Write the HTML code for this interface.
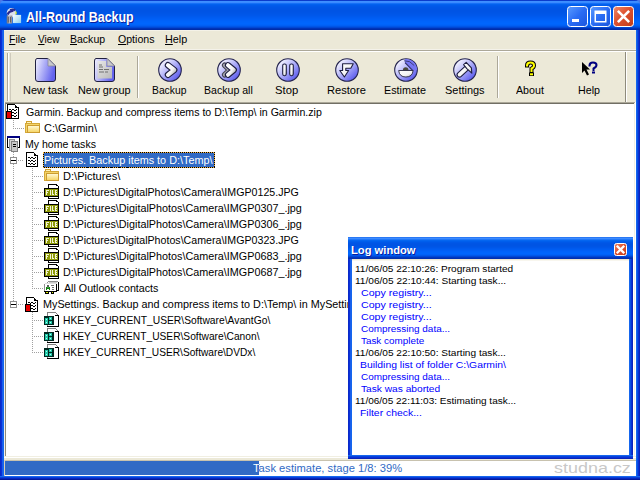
<!DOCTYPE html>
<html><head><meta charset="utf-8"><style>
html,body{margin:0;padding:0;width:640px;height:480px;overflow:hidden;background:#4A78E8;}
.t{position:absolute;white-space:pre;font-family:"Liberation Sans", sans-serif;}
svg{overflow:visible}
</style></head><body>
<div style="position:relative;width:640px;height:480px;overflow:hidden">
<div style="position:absolute;left:0px;top:0px;width:640px;height:30px;background:linear-gradient(to bottom,#0A3CCC 0.000%, #0A3CCC 3.333%,#3D8FFF 3.333%, #3D8FFF 6.667%,#3A8AFF 6.667%, #3A8AFF 10.000%,#1570F6 10.000%, #1570F6 13.333%,#0261EE 13.333%, #0261EE 16.667%,#005BEB 16.667%, #005BEB 20.000%,#0058E8 20.000%, #0058E8 23.333%,#0056E6 23.333%, #0056E6 26.667%,#0055E5 26.667%, #0055E5 30.000%,#0054E4 30.000%, #0054E4 33.333%,#0054E4 33.333%, #0054E4 36.667%,#0054E5 36.667%, #0054E5 40.000%,#0055E6 40.000%, #0055E6 43.333%,#0056E7 43.333%, #0056E7 46.667%,#0057E9 46.667%, #0057E9 50.000%,#0058EB 50.000%, #0058EB 53.333%,#005AEE 53.333%, #005AEE 56.667%,#005CF1 56.667%, #005CF1 60.000%,#005EF4 60.000%, #005EF4 63.333%,#0060F7 63.333%, #0060F7 66.667%,#0062F9 66.667%, #0062F9 70.000%,#0064FB 70.000%, #0064FB 73.333%,#0065FC 73.333%, #0065FC 76.667%,#0066FD 76.667%, #0066FD 80.000%,#0064FA 80.000%, #0064FA 83.333%,#005FF4 83.333%, #005FF4 86.667%,#0055E6 86.667%, #0055E6 90.000%,#0047D4 90.000%, #0047D4 93.333%,#0034B8 93.333%, #0034B8 96.667%,#002CA8 96.667%, #002CA8 100.000%);border-radius:5px 5px 0 0;"></div>
<svg style="position:absolute;left:5px;top:7px" width="18" height="18" viewBox="0 0 18 18"><defs><linearGradient id="gib" x1="0" y1="0" x2="1" y2="1"><stop offset="0" stop-color="#F4FCFF"/><stop offset="0.5" stop-color="#C4E8F8"/><stop offset="1" stop-color="#8CCCEC"/></linearGradient>
<linearGradient id="git" x1="0" y1="0" x2="1" y2="0"><stop offset="0" stop-color="#707078"/><stop offset="0.5" stop-color="#B8B8C0"/><stop offset="1" stop-color="#808088"/></linearGradient></defs>
<circle cx="6.4" cy="5.7" r="4.7" fill="#DCE2F0"/>
<path d="M2.6 7.6 Q3.6 4.2 8.4 3.6" stroke="#2A2A8E" stroke-width="2.2" fill="none"/>
<path d="M4.6 2.2 Q8 0.6 10.8 2.6 L9.6 4.2 Q7.8 3 5.4 3.6 Z" fill="#2C2C90"/>
<rect x="1.7" y="8.6" width="5.6" height="7.9" fill="url(#git)"/>
<rect x="2.8" y="10" width="1" height="5.5" fill="#606068"/><rect x="5" y="10" width="1" height="5.5" fill="#606068"/>
<rect x="7.9" y="7.9" width="8.2" height="8.2" fill="url(#gib)"/>
<path d="M10.9 3.8 Q12.2 5.4 11.6 7.6 L10.4 7.6 Q9.9 5.6 10.9 3.8 Z" fill="#D8F030"/>
</svg>
<div class="t" style="left:26.30px;top:8.72px;font-size:13.8px;line-height:17px;color:#fff;font-weight:bold;letter-spacing:0px;transform:scaleX(0.9008);transform-origin:0 0;text-shadow:1px 1px 0 #0A1E9E;">All-Round Backup</div>
<svg style="position:absolute;left:567px;top:6px" width="21" height="21" viewBox="0 0 21 21"><defs>
<linearGradient id="gblue" x1="0" y1="0" x2="1" y2="1"><stop offset="0" stop-color="#5A9BFF"/><stop offset="0.5" stop-color="#2A6CF4"/><stop offset="1" stop-color="#1B55DC"/></linearGradient>
<linearGradient id="gclose" x1="0" y1="0" x2="1" y2="1"><stop offset="0" stop-color="#F08A6A"/><stop offset="0.45" stop-color="#DE5230"/><stop offset="1" stop-color="#C23C18"/></linearGradient>
</defs><rect x="0.5" y="0.5" width="20" height="20" rx="3" ry="3" fill="url(#gblue)" stroke="#FFFFFF" stroke-width="1"/><rect x="5" y="13" width="7" height="3" fill="#fff"/></svg>
<svg style="position:absolute;left:590px;top:6px" width="21" height="21" viewBox="0 0 21 21"><defs>
<linearGradient id="gblue" x1="0" y1="0" x2="1" y2="1"><stop offset="0" stop-color="#5A9BFF"/><stop offset="0.5" stop-color="#2A6CF4"/><stop offset="1" stop-color="#1B55DC"/></linearGradient>
<linearGradient id="gclose" x1="0" y1="0" x2="1" y2="1"><stop offset="0" stop-color="#F08A6A"/><stop offset="0.45" stop-color="#DE5230"/><stop offset="1" stop-color="#C23C18"/></linearGradient>
</defs><rect x="0.5" y="0.5" width="20" height="20" rx="3" ry="3" fill="url(#gblue)" stroke="#FFFFFF" stroke-width="1"/><rect x="5" y="5" width="11" height="11" fill="none" stroke="#fff" stroke-width="1"/><rect x="5" y="5" width="11" height="3" fill="#fff"/><rect x="5.5" y="5.5" width="10" height="10" fill="none" stroke="#fff" stroke-width="1"/></svg>
<svg style="position:absolute;left:613px;top:6px" width="21" height="21" viewBox="0 0 21 21"><defs>
<linearGradient id="gblue" x1="0" y1="0" x2="1" y2="1"><stop offset="0" stop-color="#5A9BFF"/><stop offset="0.5" stop-color="#2A6CF4"/><stop offset="1" stop-color="#1B55DC"/></linearGradient>
<linearGradient id="gclose" x1="0" y1="0" x2="1" y2="1"><stop offset="0" stop-color="#F08A6A"/><stop offset="0.45" stop-color="#DE5230"/><stop offset="1" stop-color="#C23C18"/></linearGradient>
</defs><rect x="0.5" y="0.5" width="20" height="20" rx="3" ry="3" fill="url(#gclose)" stroke="#FFFFFF" stroke-width="1"/><path d="M5.8 5.8 L15.2 15.2 M15.2 5.8 L5.8 15.2" stroke="#fff" stroke-width="2.6" stroke-linecap="square"/></svg>
<div style="position:absolute;left:0px;top:30px;width:1px;height:450px;background:#0A2AC8;"></div>
<div style="position:absolute;left:1px;top:30px;width:1px;height:450px;background:#0831D9;"></div>
<div style="position:absolute;left:2px;top:30px;width:1px;height:450px;background:#1A5EEA;"></div>
<div style="position:absolute;left:3px;top:30px;width:1px;height:450px;background:#1566EE;"></div>
<div style="position:absolute;left:636px;top:30px;width:1px;height:450px;background:#1566EE;"></div>
<div style="position:absolute;left:637px;top:30px;width:1px;height:450px;background:#0A50E0;"></div>
<div style="position:absolute;left:638px;top:30px;width:1px;height:450px;background:#0831D9;"></div>
<div style="position:absolute;left:639px;top:30px;width:1px;height:450px;background:#0A24B8;"></div>
<div style="position:absolute;left:0px;top:476px;width:640px;height:1px;background:#1566EE;"></div>
<div style="position:absolute;left:0px;top:477px;width:640px;height:1px;background:#0840DA;"></div>
<div style="position:absolute;left:0px;top:478px;width:640px;height:1px;background:#0628C0;"></div>
<div style="position:absolute;left:0px;top:479px;width:640px;height:1px;background:#04189A;"></div>
<div style="position:absolute;left:4px;top:30px;width:632px;height:72px;background:#ECE9D8;"></div>
<div style="position:absolute;left:4px;top:30px;width:632px;height:1px;background:#F4F2E8;"></div>
<div style="position:absolute;left:4px;top:49px;width:632px;height:1px;background:#F4F2EA;"></div>
<div style="position:absolute;left:4px;top:50px;width:632px;height:1px;background:#ACA899;"></div>
<div style="position:absolute;left:4px;top:51px;width:632px;height:1px;background:#FFFFFF;"></div>
<div class="t" style="left:9.05px;top:32.69px;font-size:11px;line-height:13px;color:#000;font-weight:normal;letter-spacing:0px;transform:scaleX(0.9500);transform-origin:0 0;"><u>F</u>ile</div>
<div class="t" style="left:37.50px;top:32.69px;font-size:11px;line-height:13px;color:#000;font-weight:normal;letter-spacing:0px;transform:scaleX(0.9125);transform-origin:0 0;"><u>V</u>iew</div>
<div class="t" style="left:70.29px;top:32.69px;font-size:11px;line-height:13px;color:#000;font-weight:normal;letter-spacing:0px;transform:scaleX(0.9557);transform-origin:0 0;"><u>B</u>ackup</div>
<div class="t" style="left:117.50px;top:32.69px;font-size:11px;line-height:13px;color:#000;font-weight:normal;letter-spacing:0px;transform:scaleX(0.9605);transform-origin:0 0;"><u>O</u>ptions</div>
<div class="t" style="left:165.27px;top:32.69px;font-size:11px;line-height:13px;color:#000;font-weight:normal;letter-spacing:0px;transform:scaleX(0.9833);transform-origin:0 0;"><u>H</u>elp</div>
<div style="position:absolute;left:7px;top:53px;width:1px;height:48px;background:#ACA899;"></div>
<div style="position:absolute;left:8px;top:53px;width:1px;height:48px;background:#FFFFFF;"></div>
<div style="position:absolute;left:10px;top:53px;width:1px;height:48px;background:#CFCBBC;"></div>
<div style="position:absolute;left:137px;top:56px;width:1px;height:42px;background:#ACA899;"></div>
<div style="position:absolute;left:138px;top:56px;width:1px;height:42px;background:#FFFFFF;"></div>
<div style="position:absolute;left:497px;top:56px;width:1px;height:42px;background:#ACA899;"></div>
<div style="position:absolute;left:498px;top:56px;width:1px;height:42px;background:#FFFFFF;"></div>
<div style="position:absolute;left:625px;top:52px;width:1px;height:50px;background:#8E8B7C;"></div>
<div style="position:absolute;left:626px;top:52px;width:1px;height:50px;background:#FFFFFF;"></div>
<div class="t" style="left:22.90px;top:83.69px;font-size:11px;line-height:13px;color:#000;font-weight:normal;letter-spacing:0px;transform:scaleX(0.9955);transform-origin:0 0;">New task</div>
<div class="t" style="left:77.61px;top:83.69px;font-size:11px;line-height:13px;color:#000;font-weight:normal;letter-spacing:0px;transform:scaleX(0.9885);transform-origin:0 0;">New group</div>
<div class="t" style="left:152.06px;top:83.69px;font-size:11px;line-height:13px;color:#000;font-weight:normal;letter-spacing:0px;transform:scaleX(0.9371);transform-origin:0 0;">Backup</div>
<div class="t" style="left:204.34px;top:83.69px;font-size:11px;line-height:13px;color:#000;font-weight:normal;letter-spacing:0px;transform:scaleX(0.9612);transform-origin:0 0;">Backup all</div>
<div class="t" style="left:275.38px;top:83.69px;font-size:11px;line-height:13px;color:#000;font-weight:normal;letter-spacing:0px;transform:scaleX(1.0238);transform-origin:0 0;">Stop</div>
<div class="t" style="left:326.59px;top:83.69px;font-size:11px;line-height:13px;color:#000;font-weight:normal;letter-spacing:0px;transform:scaleX(1.0108);transform-origin:0 0;">Restore</div>
<div class="t" style="left:384.22px;top:83.69px;font-size:11px;line-height:13px;color:#000;font-weight:normal;letter-spacing:0px;transform:scaleX(0.9786);transform-origin:0 0;">Estimate</div>
<div class="t" style="left:444.71px;top:83.69px;font-size:11px;line-height:13px;color:#000;font-weight:normal;letter-spacing:0px;transform:scaleX(0.9949);transform-origin:0 0;">Settings</div>
<div class="t" style="left:515.80px;top:83.69px;font-size:11px;line-height:13px;color:#000;font-weight:normal;letter-spacing:0px;transform:scaleX(0.9690);transform-origin:0 0;">About</div>
<div class="t" style="left:577.63px;top:83.69px;font-size:11px;line-height:13px;color:#000;font-weight:normal;letter-spacing:0px;transform:scaleX(0.9714);transform-origin:0 0;">Help</div>
<svg style="position:absolute;left:34px;top:57px" width="24" height="26" viewBox="0 0 24 26"><defs><linearGradient id="gp" x1="0" y1="0" x2="1" y2="0.3"><stop offset="0" stop-color="#F4F4FF"/><stop offset="1" stop-color="#6464EE"/></linearGradient></defs>
<path d="M3 1.5 H14 L21.5 9 V22 Q21.5 24.5 19 24.5 H4 Q1.5 24.5 1.5 22 V4 Q1.5 1.5 3 1.5 Z" fill="url(#gp)" stroke="#202040" stroke-width="1"/>
<path d="M14 1.5 V9 H21.5 Z" fill="#C8C8CC" stroke="#8A8A9A" stroke-width="0.8"/></svg>
<svg style="position:absolute;left:93px;top:57px" width="24" height="26" viewBox="0 0 24 26"><defs><linearGradient id="gp2" x1="0" y1="0" x2="1" y2="0.3"><stop offset="0" stop-color="#F4F4FF"/><stop offset="1" stop-color="#6464EE"/></linearGradient>
<linearGradient id="gg2" x1="0" y1="0" x2="1" y2="1"><stop offset="0" stop-color="#E8E8E8"/><stop offset="1" stop-color="#B8B8B8"/></linearGradient></defs>
<path d="M3 1.5 H14 L21.5 9 V22 Q21.5 24.5 19 24.5 H4 Q1.5 24.5 1.5 22 V4 Q1.5 1.5 3 1.5 Z" fill="url(#gp2)" stroke="#202040" stroke-width="1"/>
<path d="M4.5 4 H13 V10 H19 V21.5 H4.5 Z" fill="url(#gg2)"/>
<path d="M14 1.5 V9 H21.5 Z" fill="#C8C8CC" stroke="#8A8A9A" stroke-width="0.8"/>
<path d="M6 8 h3 M6 10 h4 M6 12.5 h3 h1 M11 12.5 h5 M6 15 h5 M12 15 h3" stroke="#707070" stroke-width="1.2"/></svg>
<svg style="position:absolute;left:157.8px;top:57.5px" width="24" height="24" viewBox="0 0 24 24"><defs><linearGradient id="gc1" x1="0.1" y1="0.1" x2="0.9" y2="0.9"><stop offset="0" stop-color="#FCFCFF"/><stop offset="0.45" stop-color="#B6B6FA"/><stop offset="1" stop-color="#5454EC"/></linearGradient>
<linearGradient id="gw1" x1="0" y1="0" x2="1" y2="1"><stop offset="0" stop-color="#FFFFFF"/><stop offset="0.6" stop-color="#F4F4F4"/><stop offset="1" stop-color="#B8B8B8"/></linearGradient></defs><circle cx="12" cy="12" r="11.3" fill="url(#gc1)" stroke="#262650" stroke-width="1.1"/><path d="M10 7.2 L16.2 12 L10 16.8" stroke="#1E1E40" stroke-width="6.4" fill="none" stroke-linecap="round" stroke-linejoin="round"/><path d="M10 7.2 L16.2 12 L10 16.8" stroke="url(#gw1)" stroke-width="4.2" fill="none" stroke-linecap="round" stroke-linejoin="round"/></svg>
<svg style="position:absolute;left:216.8px;top:57.5px" width="24" height="24" viewBox="0 0 24 24"><defs><linearGradient id="gc2" x1="0.1" y1="0.1" x2="0.9" y2="0.9"><stop offset="0" stop-color="#FCFCFF"/><stop offset="0.45" stop-color="#B6B6FA"/><stop offset="1" stop-color="#5454EC"/></linearGradient>
<linearGradient id="gw2" x1="0" y1="0" x2="1" y2="1"><stop offset="0" stop-color="#FFFFFF"/><stop offset="0.6" stop-color="#F4F4F4"/><stop offset="1" stop-color="#B8B8B8"/></linearGradient></defs><circle cx="12" cy="12" r="11.3" fill="url(#gc2)" stroke="#262650" stroke-width="1.1"/><path d="M7.6 7.2 L12.6 12 L7.6 16.8" stroke="#404050" stroke-width="5.4" fill="none" stroke-linecap="round" stroke-linejoin="round"/><path d="M7.6 7.2 L12.6 12 L7.6 16.8" stroke="#A8A8B0" stroke-width="3.4" fill="none" stroke-linecap="round" stroke-linejoin="round"/><path d="M11 7.2 L16.8 12 L11 16.8" stroke="#1E1E40" stroke-width="6.2" fill="none" stroke-linecap="round" stroke-linejoin="round"/><path d="M11 7.2 L16.8 12 L11 16.8" stroke="url(#gw2)" stroke-width="4" fill="none" stroke-linecap="round" stroke-linejoin="round"/></svg>
<svg style="position:absolute;left:276px;top:57.5px" width="24" height="24" viewBox="0 0 24 24"><defs><linearGradient id="gc3" x1="0.1" y1="0.1" x2="0.9" y2="0.9"><stop offset="0" stop-color="#FCFCFF"/><stop offset="0.45" stop-color="#B6B6FA"/><stop offset="1" stop-color="#5454EC"/></linearGradient>
<linearGradient id="gw3" x1="0" y1="0" x2="1" y2="1"><stop offset="0" stop-color="#FFFFFF"/><stop offset="0.6" stop-color="#F4F4F4"/><stop offset="1" stop-color="#B8B8B8"/></linearGradient></defs><circle cx="12" cy="12" r="11.3" fill="url(#gc3)" stroke="#262650" stroke-width="1.1"/><rect x="6.7" y="6" width="3.6" height="11.7" rx="1.6" fill="url(#gw3)" stroke="#1E1E40" stroke-width="1.1"/><rect x="13.7" y="6" width="3.6" height="11.7" rx="1.6" fill="url(#gw3)" stroke="#1E1E40" stroke-width="1.1"/></svg>
<svg style="position:absolute;left:335.2px;top:57.5px" width="24" height="24" viewBox="0 0 24 24"><defs><linearGradient id="gc4" x1="0.1" y1="0.1" x2="0.9" y2="0.9"><stop offset="0" stop-color="#FCFCFF"/><stop offset="0.45" stop-color="#B6B6FA"/><stop offset="1" stop-color="#5454EC"/></linearGradient>
<linearGradient id="gw4" x1="0" y1="0" x2="1" y2="1"><stop offset="0" stop-color="#FFFFFF"/><stop offset="0.6" stop-color="#F4F4F4"/><stop offset="1" stop-color="#B8B8B8"/></linearGradient></defs><circle cx="12" cy="12" r="11.3" fill="url(#gc4)" stroke="#262650" stroke-width="1.1"/><path d="M7.6 5.8 H18.3 L15.8 10.2 H10.8 V12.5 H13.6 L9.4 19 L4.8 12.5 H7.6 Z" fill="url(#gw4)" stroke="#1E1E40" stroke-width="1.1" stroke-linejoin="round"/></svg>
<svg style="position:absolute;left:394.2px;top:57.5px" width="24" height="24" viewBox="0 0 24 24"><defs><linearGradient id="gc5" x1="0.1" y1="0.1" x2="0.9" y2="0.9"><stop offset="0" stop-color="#FCFCFF"/><stop offset="0.45" stop-color="#B6B6FA"/><stop offset="1" stop-color="#5454EC"/></linearGradient>
<linearGradient id="gw5" x1="0" y1="0" x2="1" y2="1"><stop offset="0" stop-color="#FFFFFF"/><stop offset="0.6" stop-color="#F4F4F4"/><stop offset="1" stop-color="#B8B8B8"/></linearGradient></defs><circle cx="12" cy="12" r="11.3" fill="url(#gc5)" stroke="#262650" stroke-width="1.1"/><path d="M11 1 A11 11 0 0 1 23 12 L19.1 12.8 L11 4.7 Z" fill="#7676F2"/><path d="M11 4.7 L19.1 12.8" stroke="#2E2E60" stroke-width="1.1"/><path d="M10 2.8 Q16 2.2 20.2 7.5" stroke="#303060" stroke-width="1" fill="none" opacity="0.8"/><path d="M8.8 12.5 Q9 9.2 11.7 9.2 Q14.4 9.2 14.6 12.5 Z" fill="#4A4A3A"/><path d="M4.7 12.5 H19.1 Q18.5 19 11.9 19 Q5.3 19 4.7 12.5 Z" fill="url(#gw5)" stroke="#2A2A40" stroke-width="0.9"/></svg>
<svg style="position:absolute;left:453.2px;top:57.5px" width="24" height="24" viewBox="0 0 24 24"><defs><linearGradient id="gc6" x1="0.1" y1="0.1" x2="0.9" y2="0.9"><stop offset="0" stop-color="#FCFCFF"/><stop offset="0.45" stop-color="#B6B6FA"/><stop offset="1" stop-color="#5454EC"/></linearGradient>
<linearGradient id="gw6" x1="0" y1="0" x2="1" y2="1"><stop offset="0" stop-color="#FFFFFF"/><stop offset="0.6" stop-color="#F4F4F4"/><stop offset="1" stop-color="#B8B8B8"/></linearGradient></defs><circle cx="12" cy="12" r="11.3" fill="url(#gc6)" stroke="#262650" stroke-width="1.1"/><path d="M14.2 9.6 L6.6 16.6" stroke="#1E1E40" stroke-width="6" stroke-linecap="round"/><path d="M14.2 9.6 L6.6 16.6" stroke="url(#gw6)" stroke-width="3.8" stroke-linecap="round"/><path d="M10.6 6.6 L13.2 4.4 L18.4 9.8 L18.8 15.2 L13.8 10.6 Z" fill="url(#gw6)" stroke="#1E1E40" stroke-width="1.1" stroke-linejoin="round"/></svg>
<svg style="position:absolute;left:524px;top:61px" width="13" height="16" viewBox="0 0 13 16"><path d="M3 4.5 Q3 1.5 6.5 1.5 Q10 1.5 10 4.5 Q10 6.5 7.5 7.5 L7.5 10" fill="none" stroke="#000" stroke-width="4" stroke-linecap="square"/>
<path d="M3 4.5 Q3 1.5 6.5 1.5 Q10 1.5 10 4.5 Q10 6.5 7.5 7.5 L7.5 10" fill="none" stroke="#FFFF00" stroke-width="2" stroke-linecap="square"/>
<rect x="5" y="11.5" width="5" height="3.5" fill="#000"/><rect x="6" y="12.3" width="3" height="2" fill="#FFFF00"/></svg>
<svg style="position:absolute;left:581px;top:61px" width="18" height="16" viewBox="0 0 18 16"><path d="M1 1 V12 L3.5 9.5 L6 14.5 L8 13.5 L5.5 8.5 H9 Z" fill="#000"/>
<path d="M8.5 4.5 Q8.5 1.5 12 1.5 Q15.5 1.5 15.5 4 Q15.5 6 12.5 7.5 V9" fill="none" stroke="#000080" stroke-width="2" stroke-linecap="square"/>
<rect x="11" y="10.5" width="3" height="2" fill="#000080"/></svg>
<div style="position:absolute;left:4px;top:102px;width:632px;height:358px;background:#FFFFFF;"></div>
<div style="position:absolute;left:4px;top:102px;width:631px;height:1px;background:#ACA899;"></div>
<div style="position:absolute;left:4px;top:103px;width:631px;height:1px;background:#716F64;"></div>
<div style="position:absolute;left:4px;top:102px;width:1px;height:356px;background:#F4F2E8;"></div>
<div style="position:absolute;left:5px;top:103px;width:1px;height:355px;background:#8E8A7A;"></div>
<div style="position:absolute;left:634px;top:103px;width:1px;height:356px;background:#F1EFE2;"></div>
<div style="position:absolute;left:635px;top:102px;width:1px;height:358px;background:#FFFFFF;"></div>
<div style="position:absolute;left:4px;top:456px;width:632px;height:1px;background:#F1EFE2;"></div>
<div style="position:absolute;left:4px;top:457px;width:632px;height:1px;background:#FFFFFF;"></div>
<div style="position:absolute;left:4px;top:458px;width:632px;height:2px;background:#ECE9D8;"></div>
<div style="position:absolute;left:13px;top:120px;width:1px;height:1px;background:#A0A0A0;"></div>
<div style="position:absolute;left:13px;top:122px;width:1px;height:1px;background:#A0A0A0;"></div>
<div style="position:absolute;left:13px;top:124px;width:1px;height:1px;background:#A0A0A0;"></div>
<div style="position:absolute;left:13px;top:126px;width:1px;height:1px;background:#A0A0A0;"></div>
<div style="position:absolute;left:13px;top:128px;width:1px;height:1px;background:#A0A0A0;"></div>
<div style="position:absolute;left:15px;top:128px;width:1px;height:1px;background:#A0A0A0;"></div>
<div style="position:absolute;left:17px;top:128px;width:1px;height:1px;background:#A0A0A0;"></div>
<div style="position:absolute;left:19px;top:128px;width:1px;height:1px;background:#A0A0A0;"></div>
<div style="position:absolute;left:21px;top:128px;width:1px;height:1px;background:#A0A0A0;"></div>
<div style="position:absolute;left:23px;top:128px;width:1px;height:1px;background:#A0A0A0;"></div>
<div style="position:absolute;left:13px;top:150px;width:1px;height:1px;background:#A0A0A0;"></div>
<div style="position:absolute;left:13px;top:152px;width:1px;height:1px;background:#A0A0A0;"></div>
<div style="position:absolute;left:13px;top:154px;width:1px;height:1px;background:#A0A0A0;"></div>
<div style="position:absolute;left:13px;top:156px;width:1px;height:1px;background:#A0A0A0;"></div>
<div style="position:absolute;left:13px;top:158px;width:1px;height:1px;background:#A0A0A0;"></div>
<div style="position:absolute;left:13px;top:160px;width:1px;height:1px;background:#A0A0A0;"></div>
<div style="position:absolute;left:13px;top:162px;width:1px;height:1px;background:#A0A0A0;"></div>
<div style="position:absolute;left:13px;top:164px;width:1px;height:1px;background:#A0A0A0;"></div>
<div style="position:absolute;left:13px;top:166px;width:1px;height:1px;background:#A0A0A0;"></div>
<div style="position:absolute;left:13px;top:168px;width:1px;height:1px;background:#A0A0A0;"></div>
<div style="position:absolute;left:13px;top:170px;width:1px;height:1px;background:#A0A0A0;"></div>
<div style="position:absolute;left:13px;top:172px;width:1px;height:1px;background:#A0A0A0;"></div>
<div style="position:absolute;left:13px;top:174px;width:1px;height:1px;background:#A0A0A0;"></div>
<div style="position:absolute;left:13px;top:176px;width:1px;height:1px;background:#A0A0A0;"></div>
<div style="position:absolute;left:13px;top:178px;width:1px;height:1px;background:#A0A0A0;"></div>
<div style="position:absolute;left:13px;top:180px;width:1px;height:1px;background:#A0A0A0;"></div>
<div style="position:absolute;left:13px;top:182px;width:1px;height:1px;background:#A0A0A0;"></div>
<div style="position:absolute;left:13px;top:184px;width:1px;height:1px;background:#A0A0A0;"></div>
<div style="position:absolute;left:13px;top:186px;width:1px;height:1px;background:#A0A0A0;"></div>
<div style="position:absolute;left:13px;top:188px;width:1px;height:1px;background:#A0A0A0;"></div>
<div style="position:absolute;left:13px;top:190px;width:1px;height:1px;background:#A0A0A0;"></div>
<div style="position:absolute;left:13px;top:192px;width:1px;height:1px;background:#A0A0A0;"></div>
<div style="position:absolute;left:13px;top:194px;width:1px;height:1px;background:#A0A0A0;"></div>
<div style="position:absolute;left:13px;top:196px;width:1px;height:1px;background:#A0A0A0;"></div>
<div style="position:absolute;left:13px;top:198px;width:1px;height:1px;background:#A0A0A0;"></div>
<div style="position:absolute;left:13px;top:200px;width:1px;height:1px;background:#A0A0A0;"></div>
<div style="position:absolute;left:13px;top:202px;width:1px;height:1px;background:#A0A0A0;"></div>
<div style="position:absolute;left:13px;top:204px;width:1px;height:1px;background:#A0A0A0;"></div>
<div style="position:absolute;left:13px;top:206px;width:1px;height:1px;background:#A0A0A0;"></div>
<div style="position:absolute;left:13px;top:208px;width:1px;height:1px;background:#A0A0A0;"></div>
<div style="position:absolute;left:13px;top:210px;width:1px;height:1px;background:#A0A0A0;"></div>
<div style="position:absolute;left:13px;top:212px;width:1px;height:1px;background:#A0A0A0;"></div>
<div style="position:absolute;left:13px;top:214px;width:1px;height:1px;background:#A0A0A0;"></div>
<div style="position:absolute;left:13px;top:216px;width:1px;height:1px;background:#A0A0A0;"></div>
<div style="position:absolute;left:13px;top:218px;width:1px;height:1px;background:#A0A0A0;"></div>
<div style="position:absolute;left:13px;top:220px;width:1px;height:1px;background:#A0A0A0;"></div>
<div style="position:absolute;left:13px;top:222px;width:1px;height:1px;background:#A0A0A0;"></div>
<div style="position:absolute;left:13px;top:224px;width:1px;height:1px;background:#A0A0A0;"></div>
<div style="position:absolute;left:13px;top:226px;width:1px;height:1px;background:#A0A0A0;"></div>
<div style="position:absolute;left:13px;top:228px;width:1px;height:1px;background:#A0A0A0;"></div>
<div style="position:absolute;left:13px;top:230px;width:1px;height:1px;background:#A0A0A0;"></div>
<div style="position:absolute;left:13px;top:232px;width:1px;height:1px;background:#A0A0A0;"></div>
<div style="position:absolute;left:13px;top:234px;width:1px;height:1px;background:#A0A0A0;"></div>
<div style="position:absolute;left:13px;top:236px;width:1px;height:1px;background:#A0A0A0;"></div>
<div style="position:absolute;left:13px;top:238px;width:1px;height:1px;background:#A0A0A0;"></div>
<div style="position:absolute;left:13px;top:240px;width:1px;height:1px;background:#A0A0A0;"></div>
<div style="position:absolute;left:13px;top:242px;width:1px;height:1px;background:#A0A0A0;"></div>
<div style="position:absolute;left:13px;top:244px;width:1px;height:1px;background:#A0A0A0;"></div>
<div style="position:absolute;left:13px;top:246px;width:1px;height:1px;background:#A0A0A0;"></div>
<div style="position:absolute;left:13px;top:248px;width:1px;height:1px;background:#A0A0A0;"></div>
<div style="position:absolute;left:13px;top:250px;width:1px;height:1px;background:#A0A0A0;"></div>
<div style="position:absolute;left:13px;top:252px;width:1px;height:1px;background:#A0A0A0;"></div>
<div style="position:absolute;left:13px;top:254px;width:1px;height:1px;background:#A0A0A0;"></div>
<div style="position:absolute;left:13px;top:256px;width:1px;height:1px;background:#A0A0A0;"></div>
<div style="position:absolute;left:13px;top:258px;width:1px;height:1px;background:#A0A0A0;"></div>
<div style="position:absolute;left:13px;top:260px;width:1px;height:1px;background:#A0A0A0;"></div>
<div style="position:absolute;left:13px;top:262px;width:1px;height:1px;background:#A0A0A0;"></div>
<div style="position:absolute;left:13px;top:264px;width:1px;height:1px;background:#A0A0A0;"></div>
<div style="position:absolute;left:13px;top:266px;width:1px;height:1px;background:#A0A0A0;"></div>
<div style="position:absolute;left:13px;top:268px;width:1px;height:1px;background:#A0A0A0;"></div>
<div style="position:absolute;left:13px;top:270px;width:1px;height:1px;background:#A0A0A0;"></div>
<div style="position:absolute;left:13px;top:272px;width:1px;height:1px;background:#A0A0A0;"></div>
<div style="position:absolute;left:13px;top:274px;width:1px;height:1px;background:#A0A0A0;"></div>
<div style="position:absolute;left:13px;top:276px;width:1px;height:1px;background:#A0A0A0;"></div>
<div style="position:absolute;left:13px;top:278px;width:1px;height:1px;background:#A0A0A0;"></div>
<div style="position:absolute;left:13px;top:280px;width:1px;height:1px;background:#A0A0A0;"></div>
<div style="position:absolute;left:13px;top:282px;width:1px;height:1px;background:#A0A0A0;"></div>
<div style="position:absolute;left:13px;top:284px;width:1px;height:1px;background:#A0A0A0;"></div>
<div style="position:absolute;left:13px;top:286px;width:1px;height:1px;background:#A0A0A0;"></div>
<div style="position:absolute;left:13px;top:288px;width:1px;height:1px;background:#A0A0A0;"></div>
<div style="position:absolute;left:13px;top:290px;width:1px;height:1px;background:#A0A0A0;"></div>
<div style="position:absolute;left:13px;top:292px;width:1px;height:1px;background:#A0A0A0;"></div>
<div style="position:absolute;left:13px;top:294px;width:1px;height:1px;background:#A0A0A0;"></div>
<div style="position:absolute;left:13px;top:296px;width:1px;height:1px;background:#A0A0A0;"></div>
<div style="position:absolute;left:13px;top:298px;width:1px;height:1px;background:#A0A0A0;"></div>
<div style="position:absolute;left:13px;top:300px;width:1px;height:1px;background:#A0A0A0;"></div>
<div style="position:absolute;left:13px;top:302px;width:1px;height:1px;background:#A0A0A0;"></div>
<div style="position:absolute;left:18px;top:160px;width:1px;height:1px;background:#A0A0A0;"></div>
<div style="position:absolute;left:20px;top:160px;width:1px;height:1px;background:#A0A0A0;"></div>
<div style="position:absolute;left:22px;top:160px;width:1px;height:1px;background:#A0A0A0;"></div>
<div style="position:absolute;left:18px;top:304px;width:1px;height:1px;background:#A0A0A0;"></div>
<div style="position:absolute;left:20px;top:304px;width:1px;height:1px;background:#A0A0A0;"></div>
<div style="position:absolute;left:22px;top:304px;width:1px;height:1px;background:#A0A0A0;"></div>
<div style="position:absolute;left:32px;top:168px;width:1px;height:1px;background:#A0A0A0;"></div>
<div style="position:absolute;left:32px;top:170px;width:1px;height:1px;background:#A0A0A0;"></div>
<div style="position:absolute;left:32px;top:172px;width:1px;height:1px;background:#A0A0A0;"></div>
<div style="position:absolute;left:32px;top:174px;width:1px;height:1px;background:#A0A0A0;"></div>
<div style="position:absolute;left:32px;top:176px;width:1px;height:1px;background:#A0A0A0;"></div>
<div style="position:absolute;left:32px;top:178px;width:1px;height:1px;background:#A0A0A0;"></div>
<div style="position:absolute;left:32px;top:180px;width:1px;height:1px;background:#A0A0A0;"></div>
<div style="position:absolute;left:32px;top:182px;width:1px;height:1px;background:#A0A0A0;"></div>
<div style="position:absolute;left:32px;top:184px;width:1px;height:1px;background:#A0A0A0;"></div>
<div style="position:absolute;left:32px;top:186px;width:1px;height:1px;background:#A0A0A0;"></div>
<div style="position:absolute;left:32px;top:188px;width:1px;height:1px;background:#A0A0A0;"></div>
<div style="position:absolute;left:32px;top:190px;width:1px;height:1px;background:#A0A0A0;"></div>
<div style="position:absolute;left:32px;top:192px;width:1px;height:1px;background:#A0A0A0;"></div>
<div style="position:absolute;left:32px;top:194px;width:1px;height:1px;background:#A0A0A0;"></div>
<div style="position:absolute;left:32px;top:196px;width:1px;height:1px;background:#A0A0A0;"></div>
<div style="position:absolute;left:32px;top:198px;width:1px;height:1px;background:#A0A0A0;"></div>
<div style="position:absolute;left:32px;top:200px;width:1px;height:1px;background:#A0A0A0;"></div>
<div style="position:absolute;left:32px;top:202px;width:1px;height:1px;background:#A0A0A0;"></div>
<div style="position:absolute;left:32px;top:204px;width:1px;height:1px;background:#A0A0A0;"></div>
<div style="position:absolute;left:32px;top:206px;width:1px;height:1px;background:#A0A0A0;"></div>
<div style="position:absolute;left:32px;top:208px;width:1px;height:1px;background:#A0A0A0;"></div>
<div style="position:absolute;left:32px;top:210px;width:1px;height:1px;background:#A0A0A0;"></div>
<div style="position:absolute;left:32px;top:212px;width:1px;height:1px;background:#A0A0A0;"></div>
<div style="position:absolute;left:32px;top:214px;width:1px;height:1px;background:#A0A0A0;"></div>
<div style="position:absolute;left:32px;top:216px;width:1px;height:1px;background:#A0A0A0;"></div>
<div style="position:absolute;left:32px;top:218px;width:1px;height:1px;background:#A0A0A0;"></div>
<div style="position:absolute;left:32px;top:220px;width:1px;height:1px;background:#A0A0A0;"></div>
<div style="position:absolute;left:32px;top:222px;width:1px;height:1px;background:#A0A0A0;"></div>
<div style="position:absolute;left:32px;top:224px;width:1px;height:1px;background:#A0A0A0;"></div>
<div style="position:absolute;left:32px;top:226px;width:1px;height:1px;background:#A0A0A0;"></div>
<div style="position:absolute;left:32px;top:228px;width:1px;height:1px;background:#A0A0A0;"></div>
<div style="position:absolute;left:32px;top:230px;width:1px;height:1px;background:#A0A0A0;"></div>
<div style="position:absolute;left:32px;top:232px;width:1px;height:1px;background:#A0A0A0;"></div>
<div style="position:absolute;left:32px;top:234px;width:1px;height:1px;background:#A0A0A0;"></div>
<div style="position:absolute;left:32px;top:236px;width:1px;height:1px;background:#A0A0A0;"></div>
<div style="position:absolute;left:32px;top:238px;width:1px;height:1px;background:#A0A0A0;"></div>
<div style="position:absolute;left:32px;top:240px;width:1px;height:1px;background:#A0A0A0;"></div>
<div style="position:absolute;left:32px;top:242px;width:1px;height:1px;background:#A0A0A0;"></div>
<div style="position:absolute;left:32px;top:244px;width:1px;height:1px;background:#A0A0A0;"></div>
<div style="position:absolute;left:32px;top:246px;width:1px;height:1px;background:#A0A0A0;"></div>
<div style="position:absolute;left:32px;top:248px;width:1px;height:1px;background:#A0A0A0;"></div>
<div style="position:absolute;left:32px;top:250px;width:1px;height:1px;background:#A0A0A0;"></div>
<div style="position:absolute;left:32px;top:252px;width:1px;height:1px;background:#A0A0A0;"></div>
<div style="position:absolute;left:32px;top:254px;width:1px;height:1px;background:#A0A0A0;"></div>
<div style="position:absolute;left:32px;top:256px;width:1px;height:1px;background:#A0A0A0;"></div>
<div style="position:absolute;left:32px;top:258px;width:1px;height:1px;background:#A0A0A0;"></div>
<div style="position:absolute;left:32px;top:260px;width:1px;height:1px;background:#A0A0A0;"></div>
<div style="position:absolute;left:32px;top:262px;width:1px;height:1px;background:#A0A0A0;"></div>
<div style="position:absolute;left:32px;top:264px;width:1px;height:1px;background:#A0A0A0;"></div>
<div style="position:absolute;left:32px;top:266px;width:1px;height:1px;background:#A0A0A0;"></div>
<div style="position:absolute;left:32px;top:268px;width:1px;height:1px;background:#A0A0A0;"></div>
<div style="position:absolute;left:32px;top:270px;width:1px;height:1px;background:#A0A0A0;"></div>
<div style="position:absolute;left:32px;top:272px;width:1px;height:1px;background:#A0A0A0;"></div>
<div style="position:absolute;left:32px;top:274px;width:1px;height:1px;background:#A0A0A0;"></div>
<div style="position:absolute;left:32px;top:276px;width:1px;height:1px;background:#A0A0A0;"></div>
<div style="position:absolute;left:32px;top:278px;width:1px;height:1px;background:#A0A0A0;"></div>
<div style="position:absolute;left:32px;top:280px;width:1px;height:1px;background:#A0A0A0;"></div>
<div style="position:absolute;left:32px;top:282px;width:1px;height:1px;background:#A0A0A0;"></div>
<div style="position:absolute;left:32px;top:284px;width:1px;height:1px;background:#A0A0A0;"></div>
<div style="position:absolute;left:32px;top:286px;width:1px;height:1px;background:#A0A0A0;"></div>
<div style="position:absolute;left:32px;top:288px;width:1px;height:1px;background:#A0A0A0;"></div>
<div style="position:absolute;left:32px;top:176px;width:1px;height:1px;background:#A0A0A0;"></div>
<div style="position:absolute;left:34px;top:176px;width:1px;height:1px;background:#A0A0A0;"></div>
<div style="position:absolute;left:36px;top:176px;width:1px;height:1px;background:#A0A0A0;"></div>
<div style="position:absolute;left:38px;top:176px;width:1px;height:1px;background:#A0A0A0;"></div>
<div style="position:absolute;left:40px;top:176px;width:1px;height:1px;background:#A0A0A0;"></div>
<div style="position:absolute;left:42px;top:176px;width:1px;height:1px;background:#A0A0A0;"></div>
<div style="position:absolute;left:32px;top:192px;width:1px;height:1px;background:#A0A0A0;"></div>
<div style="position:absolute;left:34px;top:192px;width:1px;height:1px;background:#A0A0A0;"></div>
<div style="position:absolute;left:36px;top:192px;width:1px;height:1px;background:#A0A0A0;"></div>
<div style="position:absolute;left:38px;top:192px;width:1px;height:1px;background:#A0A0A0;"></div>
<div style="position:absolute;left:40px;top:192px;width:1px;height:1px;background:#A0A0A0;"></div>
<div style="position:absolute;left:42px;top:192px;width:1px;height:1px;background:#A0A0A0;"></div>
<div style="position:absolute;left:32px;top:208px;width:1px;height:1px;background:#A0A0A0;"></div>
<div style="position:absolute;left:34px;top:208px;width:1px;height:1px;background:#A0A0A0;"></div>
<div style="position:absolute;left:36px;top:208px;width:1px;height:1px;background:#A0A0A0;"></div>
<div style="position:absolute;left:38px;top:208px;width:1px;height:1px;background:#A0A0A0;"></div>
<div style="position:absolute;left:40px;top:208px;width:1px;height:1px;background:#A0A0A0;"></div>
<div style="position:absolute;left:42px;top:208px;width:1px;height:1px;background:#A0A0A0;"></div>
<div style="position:absolute;left:32px;top:224px;width:1px;height:1px;background:#A0A0A0;"></div>
<div style="position:absolute;left:34px;top:224px;width:1px;height:1px;background:#A0A0A0;"></div>
<div style="position:absolute;left:36px;top:224px;width:1px;height:1px;background:#A0A0A0;"></div>
<div style="position:absolute;left:38px;top:224px;width:1px;height:1px;background:#A0A0A0;"></div>
<div style="position:absolute;left:40px;top:224px;width:1px;height:1px;background:#A0A0A0;"></div>
<div style="position:absolute;left:42px;top:224px;width:1px;height:1px;background:#A0A0A0;"></div>
<div style="position:absolute;left:32px;top:240px;width:1px;height:1px;background:#A0A0A0;"></div>
<div style="position:absolute;left:34px;top:240px;width:1px;height:1px;background:#A0A0A0;"></div>
<div style="position:absolute;left:36px;top:240px;width:1px;height:1px;background:#A0A0A0;"></div>
<div style="position:absolute;left:38px;top:240px;width:1px;height:1px;background:#A0A0A0;"></div>
<div style="position:absolute;left:40px;top:240px;width:1px;height:1px;background:#A0A0A0;"></div>
<div style="position:absolute;left:42px;top:240px;width:1px;height:1px;background:#A0A0A0;"></div>
<div style="position:absolute;left:32px;top:256px;width:1px;height:1px;background:#A0A0A0;"></div>
<div style="position:absolute;left:34px;top:256px;width:1px;height:1px;background:#A0A0A0;"></div>
<div style="position:absolute;left:36px;top:256px;width:1px;height:1px;background:#A0A0A0;"></div>
<div style="position:absolute;left:38px;top:256px;width:1px;height:1px;background:#A0A0A0;"></div>
<div style="position:absolute;left:40px;top:256px;width:1px;height:1px;background:#A0A0A0;"></div>
<div style="position:absolute;left:42px;top:256px;width:1px;height:1px;background:#A0A0A0;"></div>
<div style="position:absolute;left:32px;top:272px;width:1px;height:1px;background:#A0A0A0;"></div>
<div style="position:absolute;left:34px;top:272px;width:1px;height:1px;background:#A0A0A0;"></div>
<div style="position:absolute;left:36px;top:272px;width:1px;height:1px;background:#A0A0A0;"></div>
<div style="position:absolute;left:38px;top:272px;width:1px;height:1px;background:#A0A0A0;"></div>
<div style="position:absolute;left:40px;top:272px;width:1px;height:1px;background:#A0A0A0;"></div>
<div style="position:absolute;left:42px;top:272px;width:1px;height:1px;background:#A0A0A0;"></div>
<div style="position:absolute;left:32px;top:288px;width:1px;height:1px;background:#A0A0A0;"></div>
<div style="position:absolute;left:34px;top:288px;width:1px;height:1px;background:#A0A0A0;"></div>
<div style="position:absolute;left:36px;top:288px;width:1px;height:1px;background:#A0A0A0;"></div>
<div style="position:absolute;left:38px;top:288px;width:1px;height:1px;background:#A0A0A0;"></div>
<div style="position:absolute;left:40px;top:288px;width:1px;height:1px;background:#A0A0A0;"></div>
<div style="position:absolute;left:42px;top:288px;width:1px;height:1px;background:#A0A0A0;"></div>
<div style="position:absolute;left:32px;top:312px;width:1px;height:1px;background:#A0A0A0;"></div>
<div style="position:absolute;left:32px;top:314px;width:1px;height:1px;background:#A0A0A0;"></div>
<div style="position:absolute;left:32px;top:316px;width:1px;height:1px;background:#A0A0A0;"></div>
<div style="position:absolute;left:32px;top:318px;width:1px;height:1px;background:#A0A0A0;"></div>
<div style="position:absolute;left:32px;top:320px;width:1px;height:1px;background:#A0A0A0;"></div>
<div style="position:absolute;left:32px;top:322px;width:1px;height:1px;background:#A0A0A0;"></div>
<div style="position:absolute;left:32px;top:324px;width:1px;height:1px;background:#A0A0A0;"></div>
<div style="position:absolute;left:32px;top:326px;width:1px;height:1px;background:#A0A0A0;"></div>
<div style="position:absolute;left:32px;top:328px;width:1px;height:1px;background:#A0A0A0;"></div>
<div style="position:absolute;left:32px;top:330px;width:1px;height:1px;background:#A0A0A0;"></div>
<div style="position:absolute;left:32px;top:332px;width:1px;height:1px;background:#A0A0A0;"></div>
<div style="position:absolute;left:32px;top:334px;width:1px;height:1px;background:#A0A0A0;"></div>
<div style="position:absolute;left:32px;top:336px;width:1px;height:1px;background:#A0A0A0;"></div>
<div style="position:absolute;left:32px;top:338px;width:1px;height:1px;background:#A0A0A0;"></div>
<div style="position:absolute;left:32px;top:340px;width:1px;height:1px;background:#A0A0A0;"></div>
<div style="position:absolute;left:32px;top:342px;width:1px;height:1px;background:#A0A0A0;"></div>
<div style="position:absolute;left:32px;top:344px;width:1px;height:1px;background:#A0A0A0;"></div>
<div style="position:absolute;left:32px;top:346px;width:1px;height:1px;background:#A0A0A0;"></div>
<div style="position:absolute;left:32px;top:348px;width:1px;height:1px;background:#A0A0A0;"></div>
<div style="position:absolute;left:32px;top:350px;width:1px;height:1px;background:#A0A0A0;"></div>
<div style="position:absolute;left:32px;top:352px;width:1px;height:1px;background:#A0A0A0;"></div>
<div style="position:absolute;left:32px;top:320px;width:1px;height:1px;background:#A0A0A0;"></div>
<div style="position:absolute;left:34px;top:320px;width:1px;height:1px;background:#A0A0A0;"></div>
<div style="position:absolute;left:36px;top:320px;width:1px;height:1px;background:#A0A0A0;"></div>
<div style="position:absolute;left:38px;top:320px;width:1px;height:1px;background:#A0A0A0;"></div>
<div style="position:absolute;left:40px;top:320px;width:1px;height:1px;background:#A0A0A0;"></div>
<div style="position:absolute;left:42px;top:320px;width:1px;height:1px;background:#A0A0A0;"></div>
<div style="position:absolute;left:32px;top:336px;width:1px;height:1px;background:#A0A0A0;"></div>
<div style="position:absolute;left:34px;top:336px;width:1px;height:1px;background:#A0A0A0;"></div>
<div style="position:absolute;left:36px;top:336px;width:1px;height:1px;background:#A0A0A0;"></div>
<div style="position:absolute;left:38px;top:336px;width:1px;height:1px;background:#A0A0A0;"></div>
<div style="position:absolute;left:40px;top:336px;width:1px;height:1px;background:#A0A0A0;"></div>
<div style="position:absolute;left:42px;top:336px;width:1px;height:1px;background:#A0A0A0;"></div>
<div style="position:absolute;left:32px;top:352px;width:1px;height:1px;background:#A0A0A0;"></div>
<div style="position:absolute;left:34px;top:352px;width:1px;height:1px;background:#A0A0A0;"></div>
<div style="position:absolute;left:36px;top:352px;width:1px;height:1px;background:#A0A0A0;"></div>
<div style="position:absolute;left:38px;top:352px;width:1px;height:1px;background:#A0A0A0;"></div>
<div style="position:absolute;left:40px;top:352px;width:1px;height:1px;background:#A0A0A0;"></div>
<div style="position:absolute;left:42px;top:352px;width:1px;height:1px;background:#A0A0A0;"></div>
<svg style="position:absolute;left:10px;top:157px" width="7" height="7" viewBox="0 0 7 7"><g shape-rendering="crispEdges"><rect x="0" y="0" width="7" height="7" fill="#909090"/><rect x="1" y="1" width="5" height="5" fill="#FFF"/><rect x="1" y="3" width="5" height="1" fill="#000"/></g></svg>
<svg style="position:absolute;left:10px;top:301px" width="7" height="7" viewBox="0 0 7 7"><g shape-rendering="crispEdges"><rect x="0" y="0" width="7" height="7" fill="#909090"/><rect x="1" y="1" width="5" height="5" fill="#FFF"/><rect x="1" y="3" width="5" height="1" fill="#000"/></g></svg>
<svg style="position:absolute;left:6px;top:104px" width="13" height="16" viewBox="0 0 13 16"><g shape-rendering="crispEdges"><rect x="1" y="0" width="10" height="15" fill="#FFF"/><rect x="11" y="3" width="1" height="12" fill="#FFF"/><rect x="1" y="0" width="8" height="1" fill="#000"/><rect x="1" y="0" width="1" height="15" fill="#000"/><rect x="1" y="14" width="12" height="1" fill="#000"/><rect x="12" y="3" width="1" height="12" fill="#000"/><rect x="9" y="1" width="1" height="1" fill="#000"/><rect x="10" y="2" width="1" height="1" fill="#000"/><rect x="11" y="3" width="1" height="1" fill="#000"/><rect x="9" y="2" width="1" height="2" fill="#000"/><rect x="10" y="3" width="1" height="1" fill="#000"/><rect x="3" y="5" width="2" height="1" fill="#000"/><rect x="5" y="6" width="1" height="1" fill="#000"/><rect x="6" y="5" width="2" height="1" fill="#000"/><rect x="8" y="6" width="2" height="1" fill="#000"/><rect x="10" y="5" width="1" height="1" fill="#000"/><rect x="3" y="8" width="2" height="1" fill="#000"/><rect x="5" y="9" width="1" height="1" fill="#000"/><rect x="6" y="8" width="2" height="1" fill="#000"/><rect x="8" y="9" width="2" height="1" fill="#000"/><rect x="10" y="8" width="1" height="1" fill="#000"/><rect x="3" y="11" width="2" height="1" fill="#000"/><rect x="5" y="12" width="1" height="1" fill="#000"/><rect x="6" y="11" width="2" height="1" fill="#000"/><rect x="8" y="12" width="2" height="1" fill="#000"/><rect x="10" y="11" width="1" height="1" fill="#000"/><rect x="0" y="7" width="6" height="8" fill="#000"/><rect x="1" y="8" width="4" height="6" fill="#E80000"/></g></svg>
<svg style="position:absolute;left:25px;top:152px" width="13" height="16" viewBox="0 0 13 16"><g shape-rendering="crispEdges"><rect x="1" y="0" width="10" height="15" fill="#FFF"/><rect x="11" y="3" width="1" height="12" fill="#FFF"/><rect x="1" y="0" width="8" height="1" fill="#000"/><rect x="1" y="0" width="1" height="15" fill="#000"/><rect x="1" y="14" width="12" height="1" fill="#000"/><rect x="12" y="3" width="1" height="12" fill="#000"/><rect x="9" y="1" width="1" height="1" fill="#000"/><rect x="10" y="2" width="1" height="1" fill="#000"/><rect x="11" y="3" width="1" height="1" fill="#000"/><rect x="9" y="2" width="1" height="2" fill="#000"/><rect x="10" y="3" width="1" height="1" fill="#000"/><rect x="3" y="5" width="2" height="1" fill="#000"/><rect x="5" y="6" width="1" height="1" fill="#000"/><rect x="6" y="5" width="2" height="1" fill="#000"/><rect x="8" y="6" width="2" height="1" fill="#000"/><rect x="10" y="5" width="1" height="1" fill="#000"/><rect x="3" y="8" width="2" height="1" fill="#000"/><rect x="5" y="9" width="1" height="1" fill="#000"/><rect x="6" y="8" width="2" height="1" fill="#000"/><rect x="8" y="9" width="2" height="1" fill="#000"/><rect x="10" y="8" width="1" height="1" fill="#000"/><rect x="3" y="11" width="2" height="1" fill="#000"/><rect x="5" y="12" width="1" height="1" fill="#000"/><rect x="6" y="11" width="2" height="1" fill="#000"/><rect x="8" y="12" width="2" height="1" fill="#000"/><rect x="10" y="11" width="1" height="1" fill="#000"/></g></svg>
<svg style="position:absolute;left:25px;top:297px" width="13" height="16" viewBox="0 0 13 16"><g shape-rendering="crispEdges"><rect x="1" y="0" width="10" height="15" fill="#FFF"/><rect x="11" y="3" width="1" height="12" fill="#FFF"/><rect x="1" y="0" width="8" height="1" fill="#000"/><rect x="1" y="0" width="1" height="15" fill="#000"/><rect x="1" y="14" width="12" height="1" fill="#000"/><rect x="12" y="3" width="1" height="12" fill="#000"/><rect x="9" y="1" width="1" height="1" fill="#000"/><rect x="10" y="2" width="1" height="1" fill="#000"/><rect x="11" y="3" width="1" height="1" fill="#000"/><rect x="9" y="2" width="1" height="2" fill="#000"/><rect x="10" y="3" width="1" height="1" fill="#000"/><rect x="3" y="5" width="2" height="1" fill="#000"/><rect x="5" y="6" width="1" height="1" fill="#000"/><rect x="6" y="5" width="2" height="1" fill="#000"/><rect x="8" y="6" width="2" height="1" fill="#000"/><rect x="10" y="5" width="1" height="1" fill="#000"/><rect x="3" y="8" width="2" height="1" fill="#000"/><rect x="5" y="9" width="1" height="1" fill="#000"/><rect x="6" y="8" width="2" height="1" fill="#000"/><rect x="8" y="9" width="2" height="1" fill="#000"/><rect x="10" y="8" width="1" height="1" fill="#000"/><rect x="3" y="11" width="2" height="1" fill="#000"/><rect x="5" y="12" width="1" height="1" fill="#000"/><rect x="6" y="11" width="2" height="1" fill="#000"/><rect x="8" y="12" width="2" height="1" fill="#000"/><rect x="10" y="11" width="1" height="1" fill="#000"/><rect x="0" y="7" width="6" height="8" fill="#000"/><rect x="1" y="8" width="4" height="6" fill="#E80000"/></g></svg>
<svg style="position:absolute;left:25px;top:121px" width="16" height="13" viewBox="0 0 16 13"><defs><linearGradient id="gf" x1="0" y1="0" x2="0" y2="1"><stop offset="0" stop-color="#FFF8D0"/><stop offset="1" stop-color="#F6D668"/></linearGradient></defs>
<g shape-rendering="crispEdges">
<rect x="1" y="0" width="6" height="3" fill="#D0A030"/><rect x="2" y="1" width="4" height="2" fill="#FFF2B8"/>
<rect x="0" y="2" width="15" height="10" fill="#D4A838"/><rect x="1" y="3" width="13" height="8" fill="#F4D468"/>
<rect x="2" y="4" width="13" height="8" fill="#CC9C30"/><rect x="3" y="5" width="11" height="6" fill="url(#gf)"/>
</g></svg>
<svg style="position:absolute;left:44px;top:169px" width="16" height="13" viewBox="0 0 16 13"><defs><linearGradient id="gf" x1="0" y1="0" x2="0" y2="1"><stop offset="0" stop-color="#FFF8D0"/><stop offset="1" stop-color="#F6D668"/></linearGradient></defs>
<g shape-rendering="crispEdges">
<rect x="1" y="0" width="6" height="3" fill="#D0A030"/><rect x="2" y="1" width="4" height="2" fill="#FFF2B8"/>
<rect x="0" y="2" width="15" height="10" fill="#D4A838"/><rect x="1" y="3" width="13" height="8" fill="#F4D468"/>
<rect x="2" y="4" width="13" height="8" fill="#CC9C30"/><rect x="3" y="5" width="11" height="6" fill="url(#gf)"/>
</g></svg>
<svg style="position:absolute;left:6px;top:136px" width="15" height="16" viewBox="0 0 15 16"><g shape-rendering="crispEdges">
<rect x="1" y="0" width="13" height="2" fill="#000080"/>
<rect x="1" y="2" width="1" height="10" fill="#000"/><rect x="13" y="2" width="1" height="10" fill="#000"/><rect x="1" y="11" width="13" height="1" fill="#000"/>
<rect x="2" y="2" width="11" height="9" fill="#FFF"/>
<rect x="3" y="3" width="6" height="12" fill="#909090"/><rect x="4" y="4" width="4" height="10" fill="#D4D4D4"/>
<rect x="5" y="5" width="7" height="11" fill="#808080"/><rect x="6" y="6" width="5" height="9" fill="#C8C8C8"/>
<rect x="7" y="8" width="3" height="1" fill="#000"/><rect x="7" y="10" width="3" height="1" fill="#000"/></g></svg>
<svg style="position:absolute;left:43px;top:184px" width="16" height="16" viewBox="0 0 16 16"><g shape-rendering="crispEdges">
<rect x="6" y="1" width="8" height="3" fill="#FFF"/><rect x="13" y="2" width="2" height="2" fill="#FFF"/>
<rect x="5" y="0" width="9" height="1" fill="#000"/><rect x="5" y="0" width="1" height="4" fill="#000"/><rect x="13" y="0" width="1" height="2" fill="#000"/><rect x="14" y="1" width="1" height="1" fill="#000"/><rect x="15" y="2" width="1" height="2" fill="#000"/>
<rect x="1" y="4" width="15" height="9" fill="#000"/><rect x="2" y="5" width="13" height="7" fill="#8E9A08"/>
<rect x="5" y="13" width="1" height="2" fill="#000"/><rect x="15" y="13" width="1" height="2" fill="#000"/><rect x="6" y="13" width="9" height="1" fill="#FFF"/><rect x="5" y="14" width="11" height="1" fill="#000"/>
<g fill="#F4F4D8"><rect x="3" y="6" width="1" height="5"/><rect x="3" y="6" width="3" height="1"/><rect x="3" y="8" width="2" height="1"/>
<rect x="7" y="6" width="1" height="5"/>
<rect x="9" y="6" width="1" height="5"/><rect x="9" y="10" width="2" height="1"/>
<rect x="12" y="6" width="1" height="5"/><rect x="12" y="6" width="2" height="1"/><rect x="12" y="8" width="2" height="1"/><rect x="12" y="10" width="2" height="1"/></g></g></svg>
<svg style="position:absolute;left:43px;top:200px" width="16" height="16" viewBox="0 0 16 16"><g shape-rendering="crispEdges">
<rect x="6" y="1" width="8" height="3" fill="#FFF"/><rect x="13" y="2" width="2" height="2" fill="#FFF"/>
<rect x="5" y="0" width="9" height="1" fill="#000"/><rect x="5" y="0" width="1" height="4" fill="#000"/><rect x="13" y="0" width="1" height="2" fill="#000"/><rect x="14" y="1" width="1" height="1" fill="#000"/><rect x="15" y="2" width="1" height="2" fill="#000"/>
<rect x="1" y="4" width="15" height="9" fill="#000"/><rect x="2" y="5" width="13" height="7" fill="#8E9A08"/>
<rect x="5" y="13" width="1" height="2" fill="#000"/><rect x="15" y="13" width="1" height="2" fill="#000"/><rect x="6" y="13" width="9" height="1" fill="#FFF"/><rect x="5" y="14" width="11" height="1" fill="#000"/>
<g fill="#F4F4D8"><rect x="3" y="6" width="1" height="5"/><rect x="3" y="6" width="3" height="1"/><rect x="3" y="8" width="2" height="1"/>
<rect x="7" y="6" width="1" height="5"/>
<rect x="9" y="6" width="1" height="5"/><rect x="9" y="10" width="2" height="1"/>
<rect x="12" y="6" width="1" height="5"/><rect x="12" y="6" width="2" height="1"/><rect x="12" y="8" width="2" height="1"/><rect x="12" y="10" width="2" height="1"/></g></g></svg>
<svg style="position:absolute;left:43px;top:216px" width="16" height="16" viewBox="0 0 16 16"><g shape-rendering="crispEdges">
<rect x="6" y="1" width="8" height="3" fill="#FFF"/><rect x="13" y="2" width="2" height="2" fill="#FFF"/>
<rect x="5" y="0" width="9" height="1" fill="#000"/><rect x="5" y="0" width="1" height="4" fill="#000"/><rect x="13" y="0" width="1" height="2" fill="#000"/><rect x="14" y="1" width="1" height="1" fill="#000"/><rect x="15" y="2" width="1" height="2" fill="#000"/>
<rect x="1" y="4" width="15" height="9" fill="#000"/><rect x="2" y="5" width="13" height="7" fill="#8E9A08"/>
<rect x="5" y="13" width="1" height="2" fill="#000"/><rect x="15" y="13" width="1" height="2" fill="#000"/><rect x="6" y="13" width="9" height="1" fill="#FFF"/><rect x="5" y="14" width="11" height="1" fill="#000"/>
<g fill="#F4F4D8"><rect x="3" y="6" width="1" height="5"/><rect x="3" y="6" width="3" height="1"/><rect x="3" y="8" width="2" height="1"/>
<rect x="7" y="6" width="1" height="5"/>
<rect x="9" y="6" width="1" height="5"/><rect x="9" y="10" width="2" height="1"/>
<rect x="12" y="6" width="1" height="5"/><rect x="12" y="6" width="2" height="1"/><rect x="12" y="8" width="2" height="1"/><rect x="12" y="10" width="2" height="1"/></g></g></svg>
<svg style="position:absolute;left:43px;top:232px" width="16" height="16" viewBox="0 0 16 16"><g shape-rendering="crispEdges">
<rect x="6" y="1" width="8" height="3" fill="#FFF"/><rect x="13" y="2" width="2" height="2" fill="#FFF"/>
<rect x="5" y="0" width="9" height="1" fill="#000"/><rect x="5" y="0" width="1" height="4" fill="#000"/><rect x="13" y="0" width="1" height="2" fill="#000"/><rect x="14" y="1" width="1" height="1" fill="#000"/><rect x="15" y="2" width="1" height="2" fill="#000"/>
<rect x="1" y="4" width="15" height="9" fill="#000"/><rect x="2" y="5" width="13" height="7" fill="#8E9A08"/>
<rect x="5" y="13" width="1" height="2" fill="#000"/><rect x="15" y="13" width="1" height="2" fill="#000"/><rect x="6" y="13" width="9" height="1" fill="#FFF"/><rect x="5" y="14" width="11" height="1" fill="#000"/>
<g fill="#F4F4D8"><rect x="3" y="6" width="1" height="5"/><rect x="3" y="6" width="3" height="1"/><rect x="3" y="8" width="2" height="1"/>
<rect x="7" y="6" width="1" height="5"/>
<rect x="9" y="6" width="1" height="5"/><rect x="9" y="10" width="2" height="1"/>
<rect x="12" y="6" width="1" height="5"/><rect x="12" y="6" width="2" height="1"/><rect x="12" y="8" width="2" height="1"/><rect x="12" y="10" width="2" height="1"/></g></g></svg>
<svg style="position:absolute;left:43px;top:248px" width="16" height="16" viewBox="0 0 16 16"><g shape-rendering="crispEdges">
<rect x="6" y="1" width="8" height="3" fill="#FFF"/><rect x="13" y="2" width="2" height="2" fill="#FFF"/>
<rect x="5" y="0" width="9" height="1" fill="#000"/><rect x="5" y="0" width="1" height="4" fill="#000"/><rect x="13" y="0" width="1" height="2" fill="#000"/><rect x="14" y="1" width="1" height="1" fill="#000"/><rect x="15" y="2" width="1" height="2" fill="#000"/>
<rect x="1" y="4" width="15" height="9" fill="#000"/><rect x="2" y="5" width="13" height="7" fill="#8E9A08"/>
<rect x="5" y="13" width="1" height="2" fill="#000"/><rect x="15" y="13" width="1" height="2" fill="#000"/><rect x="6" y="13" width="9" height="1" fill="#FFF"/><rect x="5" y="14" width="11" height="1" fill="#000"/>
<g fill="#F4F4D8"><rect x="3" y="6" width="1" height="5"/><rect x="3" y="6" width="3" height="1"/><rect x="3" y="8" width="2" height="1"/>
<rect x="7" y="6" width="1" height="5"/>
<rect x="9" y="6" width="1" height="5"/><rect x="9" y="10" width="2" height="1"/>
<rect x="12" y="6" width="1" height="5"/><rect x="12" y="6" width="2" height="1"/><rect x="12" y="8" width="2" height="1"/><rect x="12" y="10" width="2" height="1"/></g></g></svg>
<svg style="position:absolute;left:43px;top:264px" width="16" height="16" viewBox="0 0 16 16"><g shape-rendering="crispEdges">
<rect x="6" y="1" width="8" height="3" fill="#FFF"/><rect x="13" y="2" width="2" height="2" fill="#FFF"/>
<rect x="5" y="0" width="9" height="1" fill="#000"/><rect x="5" y="0" width="1" height="4" fill="#000"/><rect x="13" y="0" width="1" height="2" fill="#000"/><rect x="14" y="1" width="1" height="1" fill="#000"/><rect x="15" y="2" width="1" height="2" fill="#000"/>
<rect x="1" y="4" width="15" height="9" fill="#000"/><rect x="2" y="5" width="13" height="7" fill="#8E9A08"/>
<rect x="5" y="13" width="1" height="2" fill="#000"/><rect x="15" y="13" width="1" height="2" fill="#000"/><rect x="6" y="13" width="9" height="1" fill="#FFF"/><rect x="5" y="14" width="11" height="1" fill="#000"/>
<g fill="#F4F4D8"><rect x="3" y="6" width="1" height="5"/><rect x="3" y="6" width="3" height="1"/><rect x="3" y="8" width="2" height="1"/>
<rect x="7" y="6" width="1" height="5"/>
<rect x="9" y="6" width="1" height="5"/><rect x="9" y="10" width="2" height="1"/>
<rect x="12" y="6" width="1" height="5"/><rect x="12" y="6" width="2" height="1"/><rect x="12" y="8" width="2" height="1"/><rect x="12" y="10" width="2" height="1"/></g></g></svg>
<svg style="position:absolute;left:43px;top:280px" width="16" height="16" viewBox="0 0 16 16"><g shape-rendering="crispEdges">
<rect x="5" y="2" width="10" height="2" fill="#FFF"/>
<rect x="5" y="1" width="10" height="1" fill="#909090"/><rect x="4" y="2" width="1" height="1" fill="#909090"/><rect x="3" y="3" width="1" height="1" fill="#909090"/>
<rect x="6" y="2" width="8" height="1" fill="#C8C8C8"/><rect x="15" y="2" width="1" height="9" fill="#000"/><rect x="14" y="10" width="2" height="1" fill="#000"/>
<rect x="1" y="4" width="13" height="8" fill="#000"/><rect x="2" y="4" width="11" height="7" fill="#FFF"/><rect x="1" y="4" width="1" height="7" fill="#909090"/><rect x="2" y="3" width="12" height="1" fill="#E0E0E0"/>
<rect x="4" y="5" width="2" height="2" fill="#606060"/>
<rect x="3" y="7" width="1" height="3" fill="#108010"/><rect x="6" y="7" width="1" height="3" fill="#108010"/><rect x="3" y="8" width="4" height="1" fill="#108010"/><rect x="4" y="7" width="2" height="1" fill="#40A040"/>
<rect x="8" y="5" width="3" height="1" fill="#707070"/><rect x="9" y="7" width="2" height="1" fill="#707070"/><rect x="9" y="9" width="2" height="1" fill="#707070"/>
<rect x="2" y="12" width="4" height="2" fill="#000"/><rect x="3" y="12" width="2" height="1" fill="#D8E800"/>
<rect x="8" y="12" width="3" height="2" fill="#000"/><rect x="9" y="12" width="1" height="1" fill="#D8E800"/>
</g></svg>
<svg style="position:absolute;left:43px;top:312px" width="16" height="16" viewBox="0 0 16 16"><g shape-rendering="crispEdges">
<rect x="4" y="0" width="11" height="14" fill="#FFF"/>
<rect x="4" y="0" width="9" height="1" fill="#808080"/><rect x="4" y="0" width="1" height="14" fill="#808080"/><rect x="13" y="1" width="1" height="1" fill="#808080"/><rect x="14" y="2" width="1" height="1" fill="#808080"/>
<rect x="12" y="3" width="4" height="1" fill="#000"/><rect x="15" y="3" width="1" height="12" fill="#000"/><rect x="4" y="14" width="12" height="1" fill="#000"/>
<rect x="1" y="4" width="10" height="9" fill="#002820"/>
<rect x="2" y="6" width="3" height="3" fill="#20C8A8"/><rect x="6" y="5" width="3" height="3" fill="#20C8A8"/><rect x="2" y="9" width="3" height="3" fill="#20C8A8"/><rect x="6" y="9" width="3" height="3" fill="#20C8A8"/>
<rect x="3" y="7" width="1" height="1" fill="#B0FFF0"/><rect x="7" y="6" width="1" height="1" fill="#B0FFF0"/><rect x="3" y="10" width="1" height="1" fill="#B0FFF0"/><rect x="7" y="10" width="1" height="1" fill="#B0FFF0"/>
</g></svg>
<svg style="position:absolute;left:43px;top:328px" width="16" height="16" viewBox="0 0 16 16"><g shape-rendering="crispEdges">
<rect x="4" y="0" width="11" height="14" fill="#FFF"/>
<rect x="4" y="0" width="9" height="1" fill="#808080"/><rect x="4" y="0" width="1" height="14" fill="#808080"/><rect x="13" y="1" width="1" height="1" fill="#808080"/><rect x="14" y="2" width="1" height="1" fill="#808080"/>
<rect x="12" y="3" width="4" height="1" fill="#000"/><rect x="15" y="3" width="1" height="12" fill="#000"/><rect x="4" y="14" width="12" height="1" fill="#000"/>
<rect x="1" y="4" width="10" height="9" fill="#002820"/>
<rect x="2" y="6" width="3" height="3" fill="#20C8A8"/><rect x="6" y="5" width="3" height="3" fill="#20C8A8"/><rect x="2" y="9" width="3" height="3" fill="#20C8A8"/><rect x="6" y="9" width="3" height="3" fill="#20C8A8"/>
<rect x="3" y="7" width="1" height="1" fill="#B0FFF0"/><rect x="7" y="6" width="1" height="1" fill="#B0FFF0"/><rect x="3" y="10" width="1" height="1" fill="#B0FFF0"/><rect x="7" y="10" width="1" height="1" fill="#B0FFF0"/>
</g></svg>
<svg style="position:absolute;left:43px;top:344px" width="16" height="16" viewBox="0 0 16 16"><g shape-rendering="crispEdges">
<rect x="4" y="0" width="11" height="14" fill="#FFF"/>
<rect x="4" y="0" width="9" height="1" fill="#808080"/><rect x="4" y="0" width="1" height="14" fill="#808080"/><rect x="13" y="1" width="1" height="1" fill="#808080"/><rect x="14" y="2" width="1" height="1" fill="#808080"/>
<rect x="12" y="3" width="4" height="1" fill="#000"/><rect x="15" y="3" width="1" height="12" fill="#000"/><rect x="4" y="14" width="12" height="1" fill="#000"/>
<rect x="1" y="4" width="10" height="9" fill="#002820"/>
<rect x="2" y="6" width="3" height="3" fill="#20C8A8"/><rect x="6" y="5" width="3" height="3" fill="#20C8A8"/><rect x="2" y="9" width="3" height="3" fill="#20C8A8"/><rect x="6" y="9" width="3" height="3" fill="#20C8A8"/>
<rect x="3" y="7" width="1" height="1" fill="#B0FFF0"/><rect x="7" y="6" width="1" height="1" fill="#B0FFF0"/><rect x="3" y="10" width="1" height="1" fill="#B0FFF0"/><rect x="7" y="10" width="1" height="1" fill="#B0FFF0"/>
</g></svg>
<div style="position:absolute;left:43px;top:152px;width:172px;height:16px;background:#316AC5;"></div>
<svg style="position:absolute;left:43px;top:152px" width="172" height="16" viewBox="0 0 172 16"><g shape-rendering="crispEdges"><rect x="0.5" y="0.5" width="171" height="15" fill="none" stroke="#F0B040" stroke-width="1"/><rect x="0.5" y="0.5" width="171" height="15" fill="none" stroke="#000" stroke-width="1" stroke-dasharray="1 1"/></g></svg>
<div class="t" style="left:25.90px;top:105.69px;font-size:11px;line-height:13px;color:#000;font-weight:normal;letter-spacing:0px;transform:scaleX(0.9619);transform-origin:0 0;">Garmin. Backup and compress items to D:\Temp\ in Garmin.zip</div>
<div class="t" style="left:43.50px;top:121.69px;font-size:11px;line-height:13px;color:#000;font-weight:normal;letter-spacing:0px;transform:scaleX(0.9952);transform-origin:0 0;">C:\Garmin\</div>
<div class="t" style="left:24.54px;top:137.69px;font-size:11px;line-height:13px;color:#000;font-weight:normal;letter-spacing:0px;transform:scaleX(0.9589);transform-origin:0 0;">My home tasks</div>
<div class="t" style="left:43.92px;top:153.69px;font-size:11px;line-height:13px;color:#FFF;font-weight:normal;letter-spacing:0px;transform:scaleX(0.9841);transform-origin:0 0;">Pictures. Backup items to D:\Temp\</div>
<div class="t" style="left:62.79px;top:169.69px;font-size:11px;line-height:13px;color:#000;font-weight:normal;letter-spacing:0px;transform:scaleX(1.0071);transform-origin:0 0;">D:\Pictures\</div>
<div class="t" style="left:62.53px;top:185.69px;font-size:11px;line-height:13px;color:#000;font-weight:normal;letter-spacing:0px;transform:scaleX(0.9669);transform-origin:0 0;">D:\Pictures\DigitalPhotos\Camera\IMGP0125.JPG</div>
<div class="t" style="left:62.52px;top:201.69px;font-size:11px;line-height:13px;color:#000;font-weight:normal;letter-spacing:0px;transform:scaleX(0.9814);transform-origin:0 0;">D:\Pictures\DigitalPhotos\Camera\IMGP0307_.jpg</div>
<div class="t" style="left:62.52px;top:217.69px;font-size:11px;line-height:13px;color:#000;font-weight:normal;letter-spacing:0px;transform:scaleX(0.9814);transform-origin:0 0;">D:\Pictures\DigitalPhotos\Camera\IMGP0306_.jpg</div>
<div class="t" style="left:62.53px;top:233.69px;font-size:11px;line-height:13px;color:#000;font-weight:normal;letter-spacing:0px;transform:scaleX(0.9669);transform-origin:0 0;">D:\Pictures\DigitalPhotos\Camera\IMGP0323.JPG</div>
<div class="t" style="left:62.52px;top:249.69px;font-size:11px;line-height:13px;color:#000;font-weight:normal;letter-spacing:0px;transform:scaleX(0.9814);transform-origin:0 0;">D:\Pictures\DigitalPhotos\Camera\IMGP0683_.jpg</div>
<div class="t" style="left:62.52px;top:265.69px;font-size:11px;line-height:13px;color:#000;font-weight:normal;letter-spacing:0px;transform:scaleX(0.9814);transform-origin:0 0;">D:\Pictures\DigitalPhotos\Camera\IMGP0687_.jpg</div>
<div class="t" style="left:63.80px;top:281.69px;font-size:11px;line-height:13px;color:#000;font-weight:normal;letter-spacing:0px;transform:scaleX(0.9711);transform-origin:0 0;">All Outlook contacts</div>
<div class="t" style="left:43.22px;top:297.69px;font-size:11px;line-height:13px;color:#000;font-weight:normal;letter-spacing:0px;transform:scaleX(0.9819);transform-origin:0 0;">MySettings. Backup and compress items to D:\Temp\ in MySettings.zip</div>
<div class="t" style="left:62.87px;top:313.69px;font-size:11px;line-height:13px;color:#000;font-weight:normal;letter-spacing:0px;transform:scaleX(0.9348);transform-origin:0 0;">HKEY_CURRENT_USER\Software\AvantGo\</div>
<div class="t" style="left:62.87px;top:329.69px;font-size:11px;line-height:13px;color:#000;font-weight:normal;letter-spacing:0px;transform:scaleX(0.9289);transform-origin:0 0;">HKEY_CURRENT_USER\Software\Canon\</div>
<div class="t" style="left:62.87px;top:345.69px;font-size:11px;line-height:13px;color:#000;font-weight:normal;letter-spacing:0px;transform:scaleX(0.9251);transform-origin:0 0;">HKEY_CURRENT_USER\Software\DVDx\</div>
<div style="position:absolute;left:348px;top:237px;width:285px;height:22px;background:linear-gradient(to bottom,#2A78F4 0.000%, #2A78F4 4.545%,#3D8BFF 4.545%, #3D8BFF 9.091%,#1F76F8 9.091%, #1F76F8 13.636%,#0566F0 13.636%, #0566F0 18.182%,#005EEC 18.182%, #005EEC 22.727%,#0058E8 22.727%, #0058E8 27.273%,#0055E5 27.273%, #0055E5 31.818%,#0054E4 31.818%, #0054E4 36.364%,#0054E4 36.364%, #0054E4 40.909%,#0055E6 40.909%, #0055E6 45.455%,#0057E9 45.455%, #0057E9 50.000%,#005AEE 50.000%, #005AEE 54.545%,#005DF2 54.545%, #005DF2 59.091%,#0060F6 59.091%, #0060F6 63.636%,#0063FA 63.636%, #0063FA 68.182%,#0065FC 68.182%, #0065FC 72.727%,#0066FD 72.727%, #0066FD 77.273%,#0062F8 77.273%, #0062F8 81.818%,#0058EA 81.818%, #0058EA 86.364%,#0048D6 86.364%, #0048D6 90.909%,#0038BE 90.909%, #0038BE 95.455%,#0030B0 95.455%, #0030B0 100.000%);"></div>
<div style="position:absolute;left:348px;top:259px;width:4px;height:200px;background:linear-gradient(to right,#0A2AC8 0 25%,#0831D9 25% 50%,#1A5EEA 50% 75%,#1566EE 75%);"></div>
<div style="position:absolute;left:629px;top:259px;width:4px;height:200px;background:linear-gradient(to right,#1566EE 0 25%,#0A50E0 25% 50%,#0831D9 50% 75%,#0A24B8 75%);"></div>
<div style="position:absolute;left:348px;top:455px;width:285px;height:4px;background:linear-gradient(to bottom,#1566EE 0 25%,#0A44DA 25% 50%,#0831D9 50% 75%,#0A24B8 75%);"></div>
<div style="position:absolute;left:352px;top:259px;width:277px;height:196px;background:#ECE9D8;"></div>
<div style="position:absolute;left:352px;top:260px;width:277px;height:195px;background:#FFFFFF;"></div>
<div style="position:absolute;left:352px;top:259px;width:277px;height:1px;background:#ECE6D0;"></div>
<div style="position:absolute;left:352px;top:260px;width:277px;height:1px;background:#F8F6EE;"></div>
<div class="t" style="left:350.98px;top:243.69px;font-size:11px;line-height:13px;color:#fff;font-weight:bold;letter-spacing:0px;transform:scaleX(1.0159);transform-origin:0 0;text-shadow:1px 1px 0 #0A1E9E;">Log window</div>
<svg style="position:absolute;left:614px;top:243px" width="13" height="13" viewBox="0 0 13 13"><defs><linearGradient id="glc" x1="0" y1="0" x2="1" y2="1"><stop offset="0" stop-color="#F08A6A"/><stop offset="0.45" stop-color="#DE5230"/><stop offset="1" stop-color="#C23C18"/></linearGradient></defs>
<rect x="0.5" y="0.5" width="12" height="12" rx="2" fill="url(#glc)" stroke="#fff" stroke-width="1"/>
<path d="M3.6 3.6 L9.4 9.4 M9.4 3.6 L3.6 9.4" stroke="#fff" stroke-width="2.3" stroke-linecap="square"/></svg>
<div class="t" style="left:354.65px;top:262.67px;font-size:9.6px;line-height:12px;color:#000;font-weight:normal;letter-spacing:0px;transform:scaleX(1.0490);transform-origin:0 0;">11/06/05 22:10:26: Program started</div>
<div class="t" style="left:354.65px;top:274.67px;font-size:9.6px;line-height:12px;color:#000;font-weight:normal;letter-spacing:0px;transform:scaleX(1.0542);transform-origin:0 0;">11/06/05 22:10:44: Starting task...</div>
<div class="t" style="left:361.20px;top:286.67px;font-size:9.6px;line-height:12px;color:#0000FF;font-weight:normal;letter-spacing:0px;transform:scaleX(1.1079);transform-origin:0 0;">Copy registry...</div>
<div class="t" style="left:361.20px;top:298.67px;font-size:9.6px;line-height:12px;color:#0000FF;font-weight:normal;letter-spacing:0px;transform:scaleX(1.1079);transform-origin:0 0;">Copy registry...</div>
<div class="t" style="left:361.20px;top:310.67px;font-size:9.6px;line-height:12px;color:#0000FF;font-weight:normal;letter-spacing:0px;transform:scaleX(1.1079);transform-origin:0 0;">Copy registry...</div>
<div class="t" style="left:360.90px;top:322.67px;font-size:9.6px;line-height:12px;color:#0000FF;font-weight:normal;letter-spacing:0px;transform:scaleX(1.0365);transform-origin:0 0;">Compressing data...</div>
<div class="t" style="left:360.90px;top:334.67px;font-size:9.6px;line-height:12px;color:#0000FF;font-weight:normal;letter-spacing:0px;transform:scaleX(1.0295);transform-origin:0 0;">Task complete</div>
<div class="t" style="left:354.65px;top:346.67px;font-size:9.6px;line-height:12px;color:#000;font-weight:normal;letter-spacing:0px;transform:scaleX(1.0528);transform-origin:0 0;">11/06/05 22:10:50: Starting task...</div>
<div class="t" style="left:359.92px;top:358.67px;font-size:9.6px;line-height:12px;color:#0000FF;font-weight:normal;letter-spacing:0px;transform:scaleX(1.0821);transform-origin:0 0;">Building list of folder C:\Garmin\</div>
<div class="t" style="left:360.90px;top:370.67px;font-size:9.6px;line-height:12px;color:#0000FF;font-weight:normal;letter-spacing:0px;transform:scaleX(1.0365);transform-origin:0 0;">Compressing data...</div>
<div class="t" style="left:360.90px;top:382.67px;font-size:9.6px;line-height:12px;color:#0000FF;font-weight:normal;letter-spacing:0px;transform:scaleX(1.0608);transform-origin:0 0;">Task was aborted</div>
<div class="t" style="left:354.66px;top:394.67px;font-size:9.6px;line-height:12px;color:#000;font-weight:normal;letter-spacing:0px;transform:scaleX(1.0438);transform-origin:0 0;">11/06/05 22:11:03: Estimating task...</div>
<div class="t" style="left:359.92px;top:406.67px;font-size:9.6px;line-height:12px;color:#0000FF;font-weight:normal;letter-spacing:0px;transform:scaleX(1.0839);transform-origin:0 0;">Filter check...</div>
<div style="position:absolute;left:4px;top:460px;width:632px;height:16px;background:#FFFFFF;"></div>
<div style="position:absolute;left:4px;top:460px;width:1px;height:16px;background:#D8D0B8;"></div>
<div style="position:absolute;left:5px;top:461px;width:254px;height:14px;background:#316AC5;"></div>
<div style="position:absolute;left:5px;top:460px;width:631px;height:1px;background:#C8C2AE;"></div>
<div style="position:absolute;left:5px;top:475px;width:631px;height:1px;background:#FFFFFF;"></div>
<div style="position:absolute;left:5px;top:460px;width:254px;height:15px;overflow:hidden">
<div class="t" style="left:248.00px;top:2.54px;font-size:10px;line-height:12px;color:#FFFFFF;font-weight:normal;letter-spacing:0px;transform:scaleX(1.1180);transform-origin:0 0;">Task estimate, stage 1/8: 39%</div>
</div>
<div style="position:absolute;left:259px;top:460px;width:377px;height:15px;overflow:hidden">
<div class="t" style="left:-6.00px;top:2.54px;font-size:10px;line-height:12px;color:#316AC5;font-weight:normal;letter-spacing:0px;transform:scaleX(1.1180);transform-origin:0 0;">Task estimate, stage 1/8: 39%</div>
</div>
<div class="t" style="left:554.40px;top:459.40px;font-size:15px;line-height:18px;color:#C8C8C8;font-weight:normal;letter-spacing:0px;transform:scaleX(1.1968);transform-origin:0 0;">studna.cz</div>
</div>
</body></html>
